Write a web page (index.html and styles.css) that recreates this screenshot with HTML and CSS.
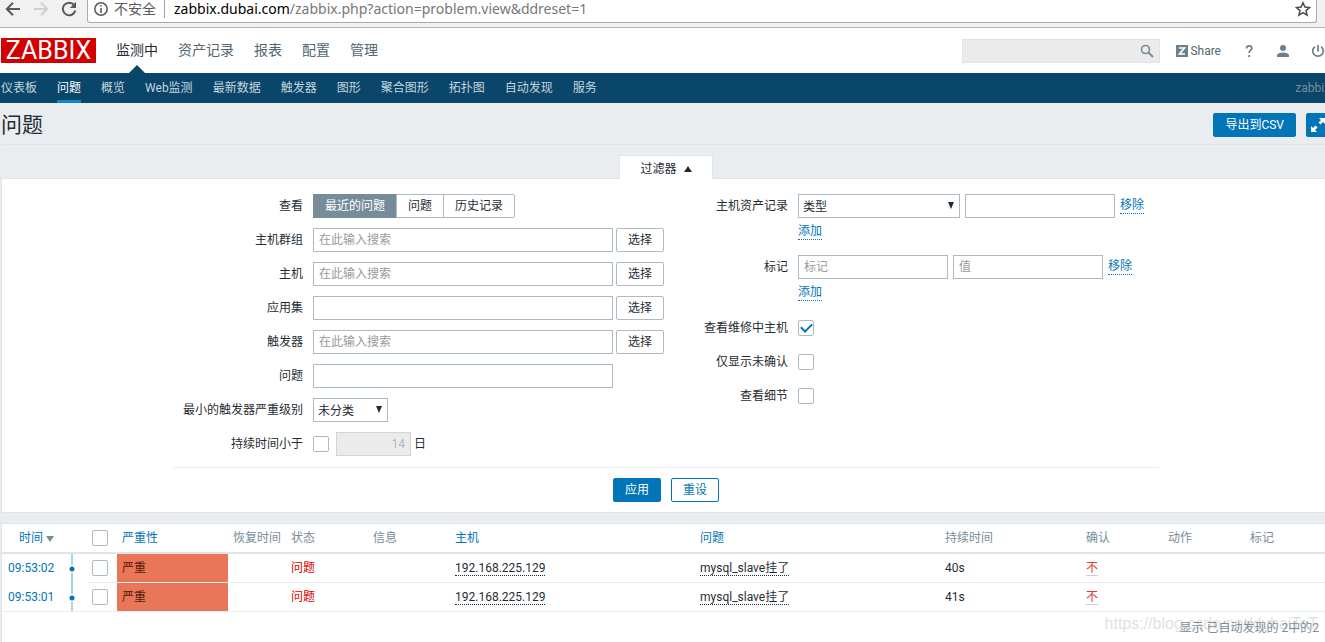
FILE: index.html
```
<!DOCTYPE html>
<html lang="zh-CN">
<head>
<meta charset="utf-8">
<title>问题</title>
<link rel="stylesheet" href="styles.css">
</head>
<body>
<div class="browser-bar">
  <button class="nav-button" aria-label="后退"><svg width="16" height="16" viewBox="0 0 16 16"><path d="M15 8H2M8 1.800L1.800 8L8 14.200" fill="none" stroke="#5a5a5a" stroke-width="2"/></svg></button>
  <button class="nav-button" aria-label="前进"><svg width="16" height="16" viewBox="0 0 16 16"><path d="M1 8H14M8 1.800L14.200 8L8 14.200" fill="none" stroke="#d0d0d0" stroke-width="2"/></svg></button>
  <button class="nav-button" aria-label="刷新"><svg width="16" height="16" viewBox="0 0 16 16"><path d="M13.200 4.200A6.300 6.300 0 1 0 14.300 9.500" fill="none" stroke="#5a5a5a" stroke-width="2"/><path d="M15 .8V7H8.800z" fill="#5a5a5a"/></svg></button>
  <div class="address">
    <svg width="14" height="14" viewBox="0 0 14 14"><circle cx="7" cy="7" r="6.200" fill="none" stroke="#5a5a5a" stroke-width="1.500"/><path d="M6.200 3h1.600v1.600H6.200zM6.200 6h1.600v5H6.200z" fill="#5a5a5a"/></svg>
    <span class="insecure">不安全</span>
    <span class="url"><span class="host">zabbix.dubai.com</span>/zabbix.php?action=problem.view&amp;ddreset=1</span>
    <svg width="16" height="16" viewBox="0 0 16 16"><path d="M8 1.800L9.900 6.100L14.500 6.500L11 9.600L12.100 14.200L8 11.700L3.900 14.200L5 9.600L1.500 6.500L6.100 6.100z" fill="none" stroke="#4a4a4a" stroke-width="1.500"/></svg>
  </div>
</div>
<div class="page">
  <header class="top">
    <a class="logo" href="#">ZABBIX</a>
    <nav class="main-menu">
      <a class="active" href="#">监测中</a><a href="#">资产记录</a><a href="#">报表</a><a href="#">配置</a><a href="#">管理</a>
    </nav>
    <div class="tools">
      <div class="search">
        <input type="text" aria-label="搜索">
        <button aria-label="搜索"><svg width="14" height="14" viewBox="0 0 14 14"><circle cx="5.500" cy="5.500" r="4" fill="none" stroke="#768d99" stroke-width="1.600"/><path d="M8.500 8.500L13 13" stroke="#768d99" stroke-width="2"/></svg></button>
      </div>
      <a class="share" href="#"><svg width="12" height="12" viewBox="0 0 12 12"><path d="M0 0h12v12H0z" fill="#69808d"/><path d="M3 3h5.500L3.500 9H9" fill="none" stroke="#fff" stroke-width="1.700"/></svg>Share</a>
      <a class="help" href="#" aria-label="帮助"><svg width="12" height="14" viewBox="0 0 12 14"><path d="M3.500 4.500C3.500 1 9 1 8.800 4.300C8.700 6.200 6.200 6.300 6.200 9M6.200 11V13" fill="none" stroke="#69808d" stroke-width="1.800"/></svg></a>
      <a class="user" href="#" aria-label="用户"><svg width="12" height="12" viewBox="0 0 12 12"><circle cx="6" cy="3" r="3" fill="#69808d"/><path d="M0 12V10Q1 7.500 6 7.500T12 10V12z" fill="#69808d"/></svg></a>
      <a class="power" href="#" aria-label="退出"><svg width="14" height="14" viewBox="0 0 14 14"><path d="M7 1V7.500M3.800 2.700A5.300 5.300 0 1 0 10.200 2.700" fill="none" stroke="#69808d" stroke-width="1.700"/></svg></a>
    </div>
  </header>
  <nav class="sub-menu">
    <a href="#">仪表板</a><a class="active" href="#">问题</a><a href="#">概览</a><a href="#">Web监测</a><a href="#">最新数据</a><a href="#">触发器</a><a href="#">图形</a><a href="#">聚合图形</a><a href="#">拓扑图</a><a href="#">自动发现</a><a href="#">服务</a>
    <span class="server">zabbix</span>
  </nav>
  <div class="title-bar">
    <h1>问题</h1>
    <button class="button primary">导出到CSV</button>
    <button class="button primary full" aria-label="全屏"><svg width="14" height="14" viewBox="0 0 14 14"><path d="M8 0h6v6l-2-2-2.500 2.500-2-2L10 2zM6 14H0V8l2 2 2.500-2.500 2 2L4 12z" fill="#fff"/></svg></button>
  </div>
  <div class="tab-row"><button class="filter-tab">过滤器 <svg width="8" height="6" viewBox="0 0 8 6"><path d="M4 0L8 6H0z" fill="#1f2c33"/></svg></button></div>
  <form class="filter">
    <div class="filter-columns">
      <div class="fields left">
        <span class="label">查看</span>
        <div class="segments"><button type="button" class="on">最近的问题</button><button type="button">问题</button><button type="button">历史记录</button></div>
        <label class="label" for="groups">主机群组</label>
        <div class="field"><input class="wide" id="groups" type="text" placeholder="在此输入搜索"><button type="button" class="button pick">选择</button></div>
        <label class="label" for="hosts">主机</label>
        <div class="field"><input class="wide" id="hosts" type="text" placeholder="在此输入搜索"><button type="button" class="button pick">选择</button></div>
        <label class="label" for="app">应用集</label>
        <div class="field"><input class="wide" id="app" type="text"><button type="button" class="button pick">选择</button></div>
        <label class="label" for="triggers">触发器</label>
        <div class="field"><input class="wide" id="triggers" type="text" placeholder="在此输入搜索"><button type="button" class="button pick">选择</button></div>
        <label class="label" for="problem">问题</label>
        <div class="field"><input class="wide" id="problem" type="text"></div>
        <label class="label" for="severity">最小的触发器严重级别</label>
        <div class="field"><span class="select small"><select id="severity"><option>未分类</option></select><svg width="6" height="7" viewBox="0 0 6 7"><path d="M0 0h6L3 7z" fill="#1f2c33"/></svg></span></div>
        <label class="label" for="age">持续时间小于</label>
        <div class="field age"><input type="checkbox" id="age"><input class="days" type="text" value="14" disabled aria-label="天数"><span>日</span></div>
      </div>
      <div class="fields right">
        <label class="label" for="inventory">主机资产记录</label>
        <div class="group">
          <div class="field spaced"><span class="select"><select id="inventory"><option>类型</option></select><svg width="6" height="7" viewBox="0 0 6 7"><path d="M0 0h6L3 7z" fill="#1f2c33"/></svg></span><input class="medium" type="text" aria-label="资产值"><a class="dotted" href="#">移除</a></div>
          <a class="dotted" href="#">添加</a>
        </div>
        <label class="label" for="tag">标记</label>
        <div class="group">
          <div class="field spaced"><input class="medium" id="tag" type="text" placeholder="标记"><input class="medium" type="text" placeholder="值" aria-label="值"><a class="dotted" href="#">移除</a></div>
          <a class="dotted" href="#">添加</a>
        </div>
        <label class="label" for="maint">查看维修中主机</label>
        <div class="field"><input type="checkbox" id="maint" checked></div>
        <label class="label" for="unack">仅显示未确认</label>
        <div class="field"><input type="checkbox" id="unack"></div>
        <label class="label" for="details">查看细节</label>
        <div class="field"><input type="checkbox" id="details"></div>
      </div>
    </div>
    <div class="actions"><button type="button" class="button primary">应用</button><button type="button" class="button outline">重设</button></div>
  </form>
  <main class="results">
    <table>
      <colgroup><col class="c-time"><col class="c-line"><col class="c-check"><col class="c-severity"><col class="c-recovery"><col class="c-small"><col class="c-small"><col class="c-large"><col class="c-large"><col class="c-duration"><col class="c-small"><col class="c-small"><col></colgroup>
      <thead>
        <tr><th class="time"><a href="#">时间 <svg width="8" height="6" viewBox="0 0 8 6"><path d="M0 0h8L4 6z" fill="#768d99"/></svg></a></th><th></th><th class="check"><input type="checkbox" aria-label="全选"></th><th><a href="#">严重性</a></th><th>恢复时间</th><th>状态</th><th>信息</th><th><a href="#">主机</a></th><th><a href="#">问题</a></th><th>持续时间</th><th>确认</th><th>动作</th><th>标记</th></tr>
      </thead>
      <tbody>
        <tr><td class="time"><a href="#">09:53:02</a></td><td class="line"><span class="dot"></span></td><td class="check"><input type="checkbox" aria-label="选择 09:53:02"></td><td class="severity">严重</td><td></td><td class="problem">问题</td><td></td><td><a class="dotted dark" href="#">192.168.225.129</a></td><td><a class="dotted dark" href="#">mysql_slave挂了</a></td><td>40s</td><td><a class="ack" href="#">不</a></td><td></td><td></td></tr>
        <tr><td class="time"><a href="#">09:53:01</a></td><td class="line"><span class="dot"></span></td><td class="check"><input type="checkbox" aria-label="选择 09:53:01"></td><td class="severity">严重</td><td></td><td class="problem">问题</td><td></td><td><a class="dotted dark" href="#">192.168.225.129</a></td><td><a class="dotted dark" href="#">mysql_slave挂了</a></td><td>41s</td><td><a class="ack" href="#">不</a></td><td></td><td></td></tr>
      </tbody>
    </table>
    <div class="summary">显示 已自动发现的 2中的2</div>
  </main>
</div>
<div class="watermark">https://blog.csdn.net/dubaiToT</div>
</body>
</html>
```
FILE: styles.css
```
* { box-sizing: border-box; }
body {
  margin: 0;
  min-height: 100vh;
  display: flex;
  flex-direction: column;
  overflow: hidden;
  background: #e9edf0;
  color: #1f2c33;
  font: 12px/16px Roboto, "Noto Sans CJK SC", sans-serif;
}
a { color: #0275b8; text-decoration: none; }
button, input, select { font: inherit; color: inherit; margin: 0; }
button { padding: 0; border: 0; background: none; }
svg { flex: none; }

.browser-bar {
  display: flex;
  height: 28px;
  padding: 0 8px 4px 5px;
  gap: 12px;
  background: #f1f1f1;
  border-bottom: 1px solid #b4b4b4;
}
.nav-button { display: flex; padding-top: 1px; width: 16px; }
.address {
  flex: 1;
  display: flex;
  align-items: center;
  margin-left: -2px;
  padding: 0 5px 4px 6px;
  height: 23px;
  background: #fff;
  border: 1px solid #a9a9a9;
  border-top: 0;
  border-radius: 0 0 3px 3px;
  color: #777;
  font: 14px/18px "Noto Sans", "Noto Sans CJK SC", sans-serif;
}
.insecure {
  margin-left: 6px;
  padding-right: 8px;
  border-right: 1px solid #a0a0a0;
  color: #5a5a5a;
}
.url { flex: 1; margin-left: 9px; }
.host { color: #000; }

.page {
  flex: 1;
  display: flex;
  flex-direction: column;
  margin-right: -6px;
  padding-left: 1px;
}
.top {
  display: flex;
  align-items: center;
  height: 45px;
  margin-left: -1px;
  padding-left: 1px;
  background: #fff;
}
.logo {
  width: 95px;
  height: 25px;
  background: #d40000;
  color: #fff;
  font-size: 25px;
  line-height: 26px;
  text-align: center;
}
.main-menu {
  display: flex;
  gap: 20px;
  margin-left: 20px;
  font-size: 14px;
  line-height: 45px;
}
.main-menu a { color: #54666f; }
.main-menu .active { position: relative; color: #1f2c33; }
.main-menu .active::after {
  content: "";
  position: absolute;
  left: 50%;
  bottom: 0;
  margin-left: -8px;
  border: 8px solid transparent;
  border-top: 0;
  border-bottom-color: #0a466a;
}
.tools { display: flex; align-items: center; margin-left: auto; padding-right: 6px; }
.search {
  display: flex;
  align-items: center;
  width: 198px;
  height: 24px;
  padding-right: 5px;
  background: #ebebeb;
  border: 1px solid #dfe4e7;
}
.search input { flex: 1; min-width: 0; border: 0; background: none; }
.search button { display: flex; }
.share {
  display: flex;
  align-items: center;
  gap: 2px;
  margin-left: 16px;
  color: #54666f;
}
.help, .user, .power { display: flex; }
.help { margin-left: 22px; }
.user { margin-left: 22px; }
.power { margin-left: 22px; }

.sub-menu {
  display: flex;
  gap: 20px;
  height: 30px;
  margin-left: -1px;
  padding-left: 1px;
  background: #0a466a;
  line-height: 30px;
}
.sub-menu a { color: #c5d5de; }
.sub-menu .active { color: #fff; border-bottom: 3px solid #1086d0; }
.server { margin-left: auto; padding-right: 1px; color: #768d99; }

.title-bar {
  display: flex;
  align-items: center;
  gap: 10px;
  height: 42px;
  padding: 2px 1px 0 0;
  border-bottom: 1px solid #dfe4e7;
}
.title-bar h1 { margin: 0 auto 0 0; font-size: 21px; font-weight: 400; line-height: 24px; }
.button {
  height: 24px;
  padding: 0 11px;
  background: #fff;
  border: 1px solid #acbbc2;
  border-radius: 2px;
  line-height: 22px;
}
.primary { background: #0275b8; border-color: #0275b8; color: #fff; }
.outline { border-color: #0275b8; color: #0275b8; }
.title-bar .full { display: flex; align-items: center; padding: 0 4px; }

.tab-row { display: flex; justify-content: center; margin-top: 10px; }
.filter-tab {
  display: flex;
  align-items: center;
  justify-content: center;
  gap: 7px;
  width: 94px;
  height: 24px;
  padding-top: 2px;
  margin-bottom: -1px;
  z-index: 1;
  background: #fff;
  border: 1px solid #dfe4e7;
  border-bottom: 0;
}
.filter { background: #fff; border: 1px solid #dfe4e7; padding-bottom: 10px; }
.filter-columns {
  display: flex;
  align-items: flex-start;
  gap: 40px;
  max-width: 986px;
  margin: 0 auto;
  padding: 15px 0 11px;
  border-bottom: 1px solid #ebeef0;
}
.fields { display: grid; column-gap: 10px; row-gap: 10px; }
.left { grid-template-columns: 130px auto; }
.right { grid-template-columns: max-content auto; }
.label { line-height: 24px; text-align: right; }
.field { display: flex; align-items: center; height: 24px; gap: 3px; }
.pick { width: 48px; }
.spaced { gap: 5px; }
.segments { display: flex; height: 24px; }
.segments button {
  padding: 0 11px;
  border: 1px solid #acbbc2;
  line-height: 22px;
  margin-left: -1px;
}
.segments .on { background: #768d99; border-color: #768d99; color: #fff; margin-left: 0; }
.segments button:last-child { border-radius: 0 2px 2px 0; }
input[type="text"] { outline: none; }
.field input[type="text"] {
  height: 24px;
  padding: 0 5px;
  border: 1px solid #acbbc2;
  border-radius: 0;
  background: #fff;
}
.field .wide { width: 300px; }
.field .medium { width: 150px; }
::placeholder { color: #9a9a9a; opacity: 1; }
.select { position: relative; width: 162px; }
.small { width: 75px; }
.select select {
  appearance: none;
  display: block;
  width: 100%;
  height: 24px;
  padding: 1px 4px 0;
  background: #fff;
  border: 1px solid #acbbc2;
  border-radius: 0;
}
.select svg { position: absolute; top: 8px; right: 6px; pointer-events: none; }
.group { height: 51px; }
.group > .dotted { display: inline-block; margin-top: 6px; }
.dotted { line-height: 15px; border-bottom: 1px dotted #0275b8; }
.dark { color: #1f2c33; border-color: #1f2c33; }
.field .days[type="text"] {
  width: 75px;
  margin-left: 4px;
  background: #ebebeb;
  border-color: #ccd5d9;
  color: #acbbc2;
  text-align: right;
}
input[type="checkbox"] {
  appearance: none;
  display: grid;
  place-items: center;
  width: 16px;
  height: 16px;
  background: #fff;
  border: 1px solid #acbbc2;
  border-radius: 2px;
}
input[type="checkbox"]:checked::after {
  content: "";
  width: 9px;
  height: 5px;
  margin-bottom: 3px;
  border: solid #0275b8;
  border-width: 0 0 2px 2px;
  transform: rotate(-45deg);
}
.actions { display: flex; justify-content: center; gap: 10px; padding-top: 10px; }
.actions .button { width: 48px; }

.results {
  flex: 1;
  margin-top: 10px;
  background: #fff;
  border: 1px solid #dfe4e7;
  border-bottom: 0;
}
table { width: 100%; table-layout: fixed; border-collapse: separate; border-spacing: 0; }
.c-time { width: 58px; }
.c-line { width: 27px; }
.c-check { width: 30px; }
.c-severity { width: 111px; }
.c-recovery { width: 58px; }
.c-small { width: 82px; }
.c-large { width: 245px; }
.c-duration { width: 141px; }
th, td { padding: 0 5px; text-align: left; font-weight: 400; white-space: nowrap; }
th { height: 30px; color: #768d99; border-bottom: 2px solid #dfe4e7; }
td { height: 29px; border-bottom: 1px solid #ebeef0; }
td.time { padding-left: 6px; }
th.time { padding-left: 17px; }
tbody tr:not(:last-child) .time, tbody tr:not(:last-child) .line { border-bottom-color: transparent; }
.line { position: relative; }
.line::before {
  content: "";
  position: absolute;
  top: 0;
  bottom: -1px;
  left: 11px;
  width: 2px;
  background: #a3d3ee;
}
tr:last-child .line::before { bottom: 0; }
.dot {
  position: absolute;
  top: 11px;
  left: 8px;
  width: 8px;
  height: 8px;
  background: radial-gradient(circle, #0275b8 2px, #fff 3px);
}
.severity { background: #e97659; background-clip: padding-box; color: #52190b; }
.problem { color: #dc0000; }
.ack { color: #e33734; border-bottom: 1px solid #c8d0d5; line-height: 15px; }
.summary { padding: 8px 11px 0 0; color: #768d99; text-align: right; }
.watermark {
  position: absolute;
  right: 7px;
  bottom: 8px;
  color: rgba(160, 160, 160, 0.35);
  font: 16px/20px "Liberation Sans", sans-serif;
  pointer-events: none;
}
```
